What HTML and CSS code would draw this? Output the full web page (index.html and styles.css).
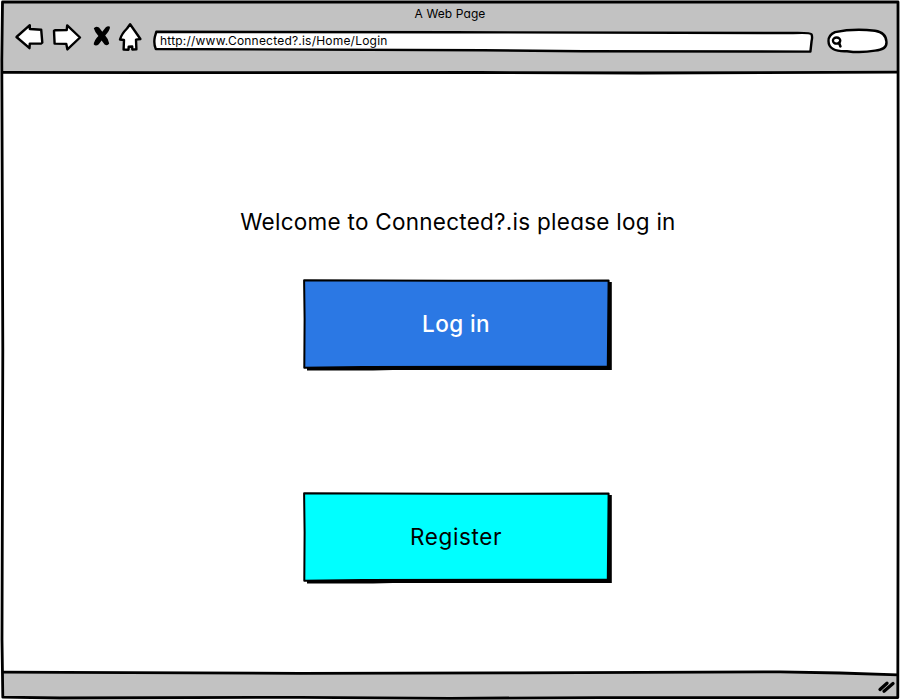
FILE: index.html
```html
<!DOCTYPE html>
<html lang="en">
<head>
<meta charset="utf-8">
<title>A Web Page</title>
<link rel="stylesheet" href="styles.css">
</head>
<body>
<div class="window">
  <svg class="frame" viewBox="0 0 900 700" aria-hidden="true">
    <path class="bar" d="M2.5 2 H898 V72.5 H2.5Z"/>
    <path class="bar" d="M2.5 672.5 L700 671.5 Q800 671 898 675 V698 H2.5Z"/>
    <path class="line" d="M2.5 2 H898 L898.3 350 L897.8 697.5 L600 697.6 L450 698.3 L300 697.3 L60 698 L2.8 697.2 L2 640 L2.8 350 L1.8 60Z"/>
    <path class="line" d="M2 72.3 L150 72.7 L480 72.5 L640 73 L898 72.2"/>
    <path class="line" d="M2 672.2 L300 673.3 L520 672.8 L780 671.9 L840 673 L898 674.8"/>
  </svg>
  <header class="chrome">
    <div class="title">A Web Page</div>
    <nav class="toolbar">
      <svg class="arrow" viewBox="0 0 30 28"><path class="icon" d="M1.5 14 L14.8 2.2 L14.8 6 L26.2 6.7 L27.3 19.6 L26 20.6 L14.8 20.6 L14.5 25.2Z"/></svg>
      <svg class="arrow next" viewBox="0 0 30 28"><path class="icon" d="M2 7.8 L3 7.2 L14.7 7 L15.2 2.4 L28 14.5 L15.4 26.4 L14.3 20.9 L2.6 20.6Z"/></svg>
      <svg class="stop" viewBox="0 0 18 21"><path d="M.8 2.2 Q3-.6 6 1.6 L9.3 5.8 L12.6 1.6 Q15-.6 17 .8 Q17.2 4 12.2 9.6 Q15.5 13 16.2 17.5 Q14.5 20.4 11.6 18.6 L8.6 14.6 L5.8 18.2 Q3 20.6 .8 18.6 Q.8 14.5 5.4 10 Q2 6.5 .8 2.2Z"/></svg>
      <svg class="home" viewBox="0 0 24 29"><path class="icon" d="M12.1 1.3 L22.4 16 L18 16.6 L18.4 26.3 L14.3 26.5 L14.2 23.5 L10.7 23.7 L10.5 26.7 L5.6 26.6 L6 17 L2 16.5 Q3.5 11 9 5.5Z"/></svg>
      <div class="address">
        <svg class="outline" viewBox="0 0 660 24" aria-hidden="true"><path class="icon" d="M3.3 1.8 L300 2.3 L640 3 Q658 2.6 658.5 4.3 Q659.6 7 658.6 11 L657.4 21.6 L430 21.3 L330 20.3 L2.8 19 Q.5 14 1.8 7Z"/></svg>
        <span class="url">http://www.Connected?.is/Home/Login</span>
      </div>
      <svg class="search" viewBox="0 0 62 26"><path class="icon" d="M8 4.2 Q26 .3 48 2.7 Q59 4.2 59.5 14 Q60 21.7 48 22.6 Q34 25.2 20 23.2 Q1.5 24 1.5 13 Q1.5 7 8 4.2Z"/><ellipse class="lens" cx="9.6" cy="12.6" rx="3.7" ry="3.1"/><path class="handle" d="M12 14.7 L13.4 18.4"/></svg>
    </nav>
  </header>
  <main class="page">
    <p class="welcome">Welcome to Connected?.is please log in</p>
    <button class="button login" type="button">
      <svg class="box" viewBox="0 0 310 92" aria-hidden="true"><path class="shadow" d="M4 3 H308.8 V91 L90 91 L70 91.6 L4 91.6Z"/><path class="face" d="M1.1 1.2 L150 1.8 L305.6 1.5 L304.8 87.6 L60 88 L1.3 88.8 L1.6 40Z"/></svg>
      <span class="label">Log in</span>
    </button>
    <button class="button register" type="button">
      <svg class="box" viewBox="0 0 310 92" aria-hidden="true"><path class="shadow" d="M4 3 H308.8 V91 L90 91 L70 91.6 L4 91.6Z"/><path class="face" d="M1.1 1.2 L150 1.8 L305.6 1.5 L304.8 87.6 L60 88 L1.3 88.8 L1.6 40Z"/></svg>
      <span class="label">Register</span>
    </button>
  </main>
  <footer class="status">
    <svg class="grip" viewBox="0 0 20 16"><path d="M4 10.5 L11 4.2 M8 12.2 L17 4.6"/></svg>
  </footer>
</div>
</body>
</html>
```
FILE: styles.css
```css
* { box-sizing: border-box; }
body {
  margin: 0;
  background: #fff;
  color: #000;
  font-family: Inter, "Liberation Sans", sans-serif;
  font-feature-settings: "cv11";
}
.window {
  position: relative;
  isolation: isolate;
  display: grid;
  grid-template-rows: 74px 1fr 26px;
  width: 900px;
  height: 700px;
  overflow: hidden;
}
.frame { position: absolute; inset: 0; z-index: -1; width: 900px; height: 700px; }
.bar { fill: #c2c2c2; }
.line { fill: none; stroke: #000; stroke-width: 2.8; stroke-linejoin: round; }
.icon { fill: #fff; stroke: #000; stroke-width: 2.4; stroke-linejoin: round; }
svg { display: block; flex: none; overflow: visible; }
.chrome { padding-top: 5px; }
.title {
  height: 17px;
  text-align: center;
  font-size: 12px;
  line-height: 17px;
  letter-spacing: .1px;
}
.toolbar { display: flex; align-items: flex-start; padding-left: 15px; }
.arrow { width: 30px; height: 28px; margin-top: 1px; }
.next { margin-left: 7px; }
.stop { width: 18px; height: 21px; margin: 4px 0 0 11px; }
.home { width: 24px; height: 29px; margin: 1px 0 0 7px; }
.address {
  position: relative;
  width: 660px;
  height: 24px;
  margin: 8px 0 0 11px;
  padding-left: 7px;
}
.outline { position: absolute; inset: 0; z-index: -1; width: 660px; height: 24px; }
.url { display: block; font-size: 12px; line-height: 22px; letter-spacing: .21px; white-space: nowrap; }
.search { width: 62px; height: 26px; margin: 6px 0 0 14px; }
.lens { fill: none; stroke: #000; stroke-width: 2.3; }
.handle { fill: none; stroke: #000; stroke-width: 2.6; stroke-linecap: round; }
.page { display: flex; flex-direction: column; align-items: center; padding: 133px 0 0 16px; }
.welcome { margin: 0; height: 30px; font-size: 22.5px; line-height: 30px; letter-spacing: .26px; white-space: nowrap; }
.button {
  position: relative;
  isolation: isolate;
  width: 310px;
  height: 92px;
  padding: 0 4px 2px 0;
  border: 0;
  background: none;
  font: 22.5px/30px Inter, "Liberation Sans", sans-serif;
  font-feature-settings: "cv11";
  letter-spacing: .6px;
}
.login { margin-top: 42px; color: #fff; font-weight: 500; letter-spacing: .4px; }
.register { margin-top: 121px; color: #000; }
.box { position: absolute; inset: 0; z-index: -1; width: 310px; height: 92px; }
.face { stroke: #000; stroke-width: 2; stroke-linejoin: round; }
.login .face { fill: #2b78e4; }
.register .face { fill: #0ff; }
.status { display: flex; justify-content: flex-end; padding: 5px 4px 0 0; }
.grip { width: 20px; height: 16px; fill: none; stroke: #000; stroke-width: 3.3; stroke-linecap: round; }
```
